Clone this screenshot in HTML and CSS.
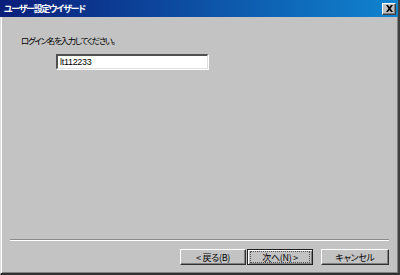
FILE: index.html
```html
<!DOCTYPE html>
<html lang="ja">
<head>
<meta charset="utf-8">
<link rel="stylesheet" href="styles.css">
</head>
<body>
<div class="window">
  <div class="titlebar">
    <span class="title">ユーザー設定ウイザード</span>
    <span class="close"><svg width="9" height="7" viewBox="0 0 9 7"><path d="M1 0h2l1.5 2L6 0h2L5.5 3.5 8 7H6L4.5 5 3 7H1l2.5-3.5z" fill="#000"/></svg></span>
  </div>
  <div class="content">
    <div class="label">ログイン名を入力してください。</div>
    <div class="input">lt112233</div>
  </div>
  <div class="separator"></div>
  <div class="buttons">
    <div class="btn">&lt; 戻る(<u>B</u>)</div>
    <div class="btn default"><span class="focus">次へ(<u>N</u>) &gt;</span></div>
    <div class="btn cancel">キャンセル</div>
  </div>
</div>
</body>
</html>
```
FILE: styles.css
```css
html, body {
  margin: 0;
  padding: 0;
  background: #c0c0c0;
}
.window {
  width: 400px;
  height: 275px;
  box-sizing: border-box;
  display: flex;
  flex-direction: column;
  background: #c3c3c3;
  border-left: 1px solid #dfdfdf;
  box-shadow: inset 1px 0 0 #fff, inset -1px -1px 0 #808080;
  border-right: 2px solid #404040;
  border-bottom: 2px solid #303030;
  font-family: "Noto Sans CJK JP", "Noto Sans", sans-serif;
  font-feature-settings: "palt";
  font-size: 9px;
  color: #000;
}
.titlebar {
  height: 17px;
  margin-left: -1px;
  display: flex;
  align-items: center;
  justify-content: space-between;
  background: linear-gradient(to right, #0a1e7a, #1084d0);
  padding: 0 2px 0 4px;
}
.title {
  color: #fff;
  font-weight: bold;
  font-size: 9px;
  letter-spacing: -1.3px;
}
.close {
  width: 12px;
  height: 10px;
  display: flex;
  align-items: center;
  justify-content: center;
  background: #c0c0c0;
  border-top: 1px solid #fff;
  border-left: 1px solid #fff;
  border-right: 1px solid #404040;
  border-bottom: 1px solid #404040;
  box-shadow: inset -1px -1px 0 #808080;
}
.content {
  flex: 1;
  padding: 16px 0 0 20px;
}
.label {
  height: 14px;
  line-height: 14px;
  font-size: 8.5px;
  letter-spacing: -1.3px;
}
.input {
  margin: 7px 0 0 35px;
  width: 147px;
  height: 12px;
  line-height: 12px;
  padding-left: 2px;
  background: #fff;
  border-top: 2px solid #505050;
  border-left: 2px solid #505050;
  border-right: 1px solid #dfdfdf;
  border-bottom: 1px solid #dfdfdf;
  box-shadow: 1px 1px 0 #fff;
  font-family: "Liberation Sans", sans-serif;
  font-size: 9px;
  letter-spacing: -0.3px;
}
.separator {
  margin: 0 9px 0 9px;
  height: 1px;
  background: #8a8a8a;
  border-bottom: 1px solid #fff;
}
.buttons {
  display: flex;
  justify-content: flex-end;
  padding: 8px 9px 8px 0;
}
.btn {
  width: 64px;
  height: 14px;
  display: flex;
  align-items: center;
  justify-content: center;
  background: #c3c3c3;
  border-top: 1px solid #fff;
  border-left: 1px solid #fff;
  border-right: 1px solid #303030;
  border-bottom: 1px solid #303030;
  box-shadow: inset -1px -1px 0 #808080;
  letter-spacing: -0.3px;
}
.btn u { text-decoration: none; }
.default {
  width: 64px;
  margin-left: 1px;
  border: 1px solid #202020;
  box-shadow: inset 1px 1px 0 #fff, inset -1px -1px 0 #808080;
}
.focus {
  display: flex;
  align-items: center;
  justify-content: center;
  width: 58px;
  height: 10px;
  outline: 1px dotted #505050;
}
.cancel {
  margin-left: 8px;
  width: 66px;
}
```
